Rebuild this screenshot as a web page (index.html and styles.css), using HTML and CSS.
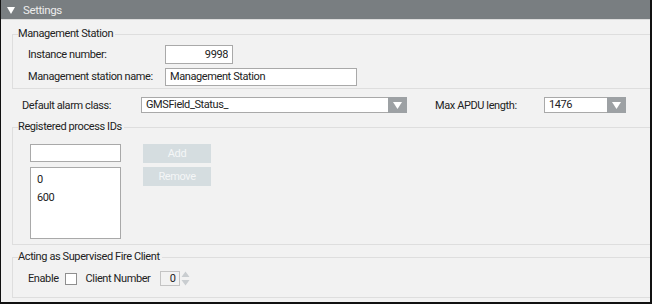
FILE: index.html
```html
<!DOCTYPE html>
<html lang="en">
<head>
  <meta charset="UTF-8">
  <title>Settings</title>
  <link rel="stylesheet" href="styles.css">
</head>
<body>
  <div class="panel">
    <div class="header">
      <svg class="header-caret" width="8" height="7" viewBox="0 0 8 7"><path d="M0 0H8L4 7Z" fill="#ffffff"/></svg>
      <span>Settings</span>
    </div>

    <fieldset class="group group-station">
      <legend>Management Station</legend>
      <div class="rows">
        <div class="form-row">
          <label class="label-station" for="instance">Instance number:</label>
          <input id="instance" class="input input-num" value="9998">
        </div>
        <div class="form-row">
          <label class="label-station" for="stationName">Management station name:</label>
          <input id="stationName" class="input input-name" value="Management Station">
        </div>
      </div>
    </fieldset>

    <div class="alarm-row">
      <span class="label-alarm">Default alarm class:</span>
      <div class="select select-alarm">
        <span class="select-text">GMSField_Status_</span>
        <span class="select-btn"><svg width="9" height="7" viewBox="0 0 9 7"><path d="M0 0H9L4.5 7Z" fill="#ffffff"/></svg></span>
      </div>
      <span class="label-apdu">Max APDU length:</span>
      <div class="select select-apdu">
        <span class="select-text">1476</span>
        <span class="select-btn"><svg width="9" height="7" viewBox="0 0 9 7"><path d="M0 0H9L4.5 7Z" fill="#ffffff"/></svg></span>
      </div>
    </div>

    <fieldset class="group group-ids">
      <legend>Registered process IDs</legend>
      <div class="ids">
        <div class="ids-list">
          <input class="input input-id">
          <div class="listbox">
            <div class="list-item">0</div>
            <div class="list-item">600</div>
          </div>
        </div>
        <div class="ids-buttons">
          <button class="btn" disabled>Add</button>
          <button class="btn" disabled>Remove</button>
        </div>
      </div>
    </fieldset>

    <fieldset class="group group-fire">
      <legend>Acting as Supervised Fire Client</legend>
      <div class="fire-row">
        <span>Enable</span>
        <span class="checkbox"></span>
        <span class="label-client">Client Number</span>
        <div class="spin">
          <span class="spin-value">0</span>
          <svg class="spin-arrows" width="9" height="15" viewBox="0 0 9 15"><path d="M0.5 6H8.5L4.5 0.5Z M0.5 9H8.5L4.5 14.5Z" fill="#c9cdd0"/></svg>
        </div>
      </div>
    </fieldset>
  </div>
</body>
</html>
```

FILE: styles.css
```css
:root {
  --bg: #f2f2f2;
  --text: #222;
  --line: #dedede;
  --field-border: #a9a9a9;
  --header: #797e81;
  --drop: #9da1a4;
}

body {
  margin: 0;
  background: var(--bg);
  font-family: Roboto, 'Noto Sans', sans-serif;
  font-size: 11px;
  letter-spacing: -0.4px;
  color: var(--text);
  white-space: nowrap;
}

.panel {
  width: 652px;
  height: 304px;
  box-sizing: border-box;
  border: 1px solid #111;
  border-top: none;
  border-right-width: 2px;
  border-bottom-width: 2px;
  background: var(--bg);
  display: flex;
  flex-direction: column;
}

.header {
  height: 19px;
  background: var(--header);
  border-bottom: 1px solid #dcdcdc;
  color: #ececec;
  font-size: 11.5px;
  display: flex;
  align-items: center;
  padding-left: 6px;
  gap: 8px;
}

.header-caret {
  margin-top: 1px;
}

.group {
  margin: 6px 0 0 11px;
  padding: 0 0 0 5px;
  border: 1px solid var(--line);
  border-right: none;
  min-width: 0;
}

.group legend {
  padding: 0 2px 0 0;
  height: 16px;
  line-height: 16px;
  font-size: 11px;
}

.rows {
  display: flex;
  flex-direction: column;
  gap: 3px;
  padding: 3px 0 2px 10px;
}

.form-row {
  display: flex;
  align-items: center;
  height: 19px;
}

.label-station {
  width: 137px;
}

.input {
  box-sizing: border-box;
  border: 1px solid var(--field-border);
  background: #fff;
  font: inherit;
  letter-spacing: inherit;
  color: var(--text);
  padding: 0 4px;
  margin: 0;
  outline: none;
}

.input-num {
  width: 68px;
  height: 19px;
  text-align: right;
}

.input-name {
  width: 192px;
  height: 18px;
}

.alarm-row {
  display: flex;
  align-items: center;
  height: 16px;
  margin: 8px 0 6px;
  padding-left: 21px;
}

.label-alarm {
  width: 119px;
}

.label-apdu {
  width: 109px;
  margin-left: 28px;
}

.select {
  box-sizing: border-box;
  height: 16px;
  border: 1px solid var(--field-border);
  border-right: none;
  background: #fff;
  display: flex;
  align-items: stretch;
}

.select-alarm {
  width: 266px;
}

.select-apdu {
  width: 82px;
}

.select-text {
  flex: 1;
  padding-left: 4px;
  line-height: 14px;
}

.select-btn {
  width: 19px;
  margin: -1px 0;
  background: var(--drop);
  display: flex;
  align-items: center;
  justify-content: center;
}

.group-ids {
  margin-top: 0;
}

.ids {
  display: flex;
  gap: 22px;
  padding: 9px 0 5px 12px;
}

.ids-list {
  display: flex;
  flex-direction: column;
  gap: 5px;
}

.input-id {
  width: 91px;
  height: 18px;
}

.listbox {
  box-sizing: border-box;
  width: 91px;
  height: 72px;
  border: 1px solid var(--field-border);
  background: #fff;
  padding: 3px 0 0 6px;
}

.list-item {
  height: 18px;
  line-height: 18px;
}

.ids-buttons {
  display: flex;
  flex-direction: column;
  gap: 4px;
}

.btn {
  width: 68px;
  height: 19px;
  border: none;
  background: #d5dde0;
  color: #f4f6f7;
  font: inherit;
  letter-spacing: inherit;
  padding: 0;
}

.group-fire {
  margin-top: 4px;
}

.fire-row {
  display: flex;
  align-items: center;
  height: 15px;
  padding: 6px 0 11px 10px;
}

.checkbox {
  box-sizing: border-box;
  width: 12px;
  height: 12px;
  border: 1px solid #8f8f8f;
  background: #fff;
  margin: 0 9px 0 6px;
}

.label-client {
  width: 74px;
}

.spin {
  display: flex;
  align-items: center;
  gap: 1px;
}

.spin-value {
  box-sizing: border-box;
  width: 20px;
  height: 15px;
  border: 1px solid #c4c4c4;
  background: var(--bg);
  text-align: right;
  padding-right: 3px;
  line-height: 13px;
}
```
